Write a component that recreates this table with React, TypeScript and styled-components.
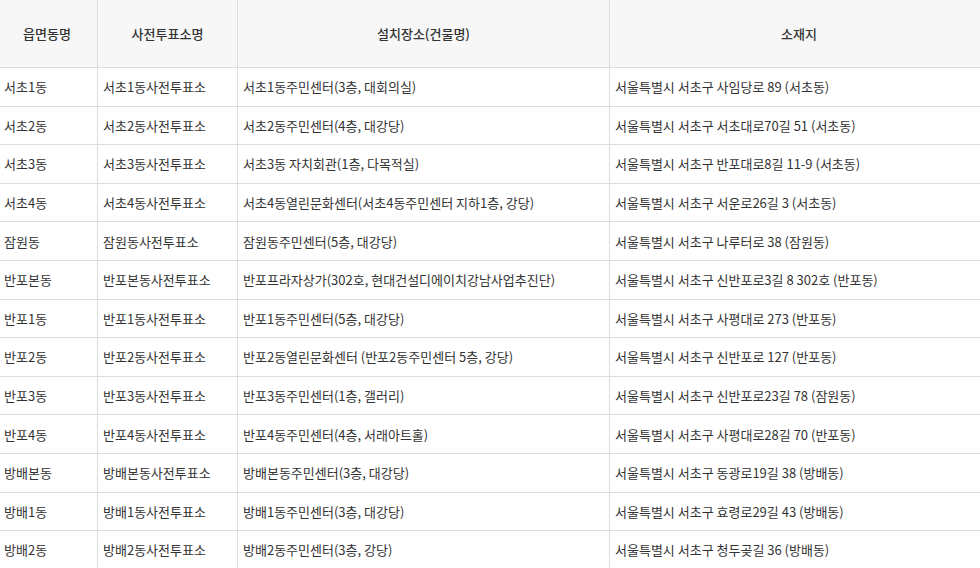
import styled, { createGlobalStyle } from 'styled-components';

const GlobalStyle = createGlobalStyle`
  html, body {
    margin: 0;
    padding: 0;
    background: #fff;
    overflow: hidden;
  }
  body {
    font-family: "Noto Sans CJK KR", "Noto Sans", sans-serif;
    color: #333;
  }
`;

const Wrapper = styled.div`
  width: 980px;
  height: 568px;
  overflow: hidden;
`;

const Table = styled.table`
  margin-left: -3px;
  width: 988px;
  border-collapse: collapse;
  table-layout: fixed;
  font-size: 13px;
`;

const HeadCell = styled.th<{ $w: number }>`
  width: ${({ $w }) => $w}px;
  height: 67px;
  padding: 0;
  background: #f7f7f7;
  border-right: 1px solid #ddd;
  border-bottom: 1px solid #ddd;
  font-weight: 500;
  color: #333;
  text-align: center;
  vertical-align: middle;
  &:last-child {
    border-right: none;
  }
`;

const Row = styled.tr`
  height: 38.6px;
`;

const Cell = styled.td`
  padding: 0 5px;
  border-right: 1px solid #ddd;
  border-bottom: 1px solid #ddd;
  color: #333;
  white-space: nowrap;
  overflow: hidden;
  vertical-align: middle;
  &:first-child {
    padding-left: 7px;
  }
  &:last-child {
    border-right: none;
  }
`;

const rows: [string, string, string, string][] = [
  ['서초1동', '서초1동사전투표소', '서초1동주민센터(3층, 대회의실)', '서울특별시 서초구 사임당로 89 (서초동)'],
  ['서초2동', '서초2동사전투표소', '서초2동주민센터(4층, 대강당)', '서울특별시 서초구 서초대로70길 51 (서초동)'],
  ['서초3동', '서초3동사전투표소', '서초3동 자치회관(1층, 다목적실)', '서울특별시 서초구 반포대로8길 11-9 (서초동)'],
  ['서초4동', '서초4동사전투표소', '서초4동열린문화센터(서초4동주민센터 지하1층, 강당)', '서울특별시 서초구 서운로26길 3 (서초동)'],
  ['잠원동', '잠원동사전투표소', '잠원동주민센터(5층, 대강당)', '서울특별시 서초구 나루터로 38 (잠원동)'],
  ['반포본동', '반포본동사전투표소', '반포프라자상가(302호, 현대건설디에이치강남사업추진단)', '서울특별시 서초구 신반포로3길 8 302호 (반포동)'],
  ['반포1동', '반포1동사전투표소', '반포1동주민센터(5층, 대강당)', '서울특별시 서초구 사평대로 273 (반포동)'],
  ['반포2동', '반포2동사전투표소', '반포2동열린문화센터 (반포2동주민센터 5층, 강당)', '서울특별시 서초구 신반포로 127 (반포동)'],
  ['반포3동', '반포3동사전투표소', '반포3동주민센터(1층, 갤러리)', '서울특별시 서초구 신반포로23길 78 (잠원동)'],
  ['반포4동', '반포4동사전투표소', '반포4동주민센터(4층, 서래아트홀)', '서울특별시 서초구 사평대로28길 70 (반포동)'],
  ['방배본동', '방배본동사전투표소', '방배본동주민센터(3층, 대강당)', '서울특별시 서초구 동광로19길 38 (방배동)'],
  ['방배1동', '방배1동사전투표소', '방배1동주민센터(3층, 대강당)', '서울특별시 서초구 효령로29길 43 (방배동)'],
  ['방배2동', '방배2동사전투표소', '방배2동주민센터(3층, 강당)', '서울특별시 서초구 청두곶길 36 (방배동)'],
];

export default function App() {
  return (
    <Wrapper>
      <GlobalStyle />
      <Table>
        <thead>
          <tr>
            <HeadCell $w={100}>읍면동명</HeadCell>
            <HeadCell $w={139}>사전투표소명</HeadCell>
            <HeadCell $w={371}>설치장소(건물명)</HeadCell>
            <HeadCell $w={378}>소재지</HeadCell>
          </tr>
        </thead>
        <tbody>
          {rows.map((r) => (
            <Row key={r[1]}>
              {r.map((c, i) => (
                <Cell key={i}>{c}</Cell>
              ))}
            </Row>
          ))}
        </tbody>
      </Table>
    </Wrapper>
  );
}
